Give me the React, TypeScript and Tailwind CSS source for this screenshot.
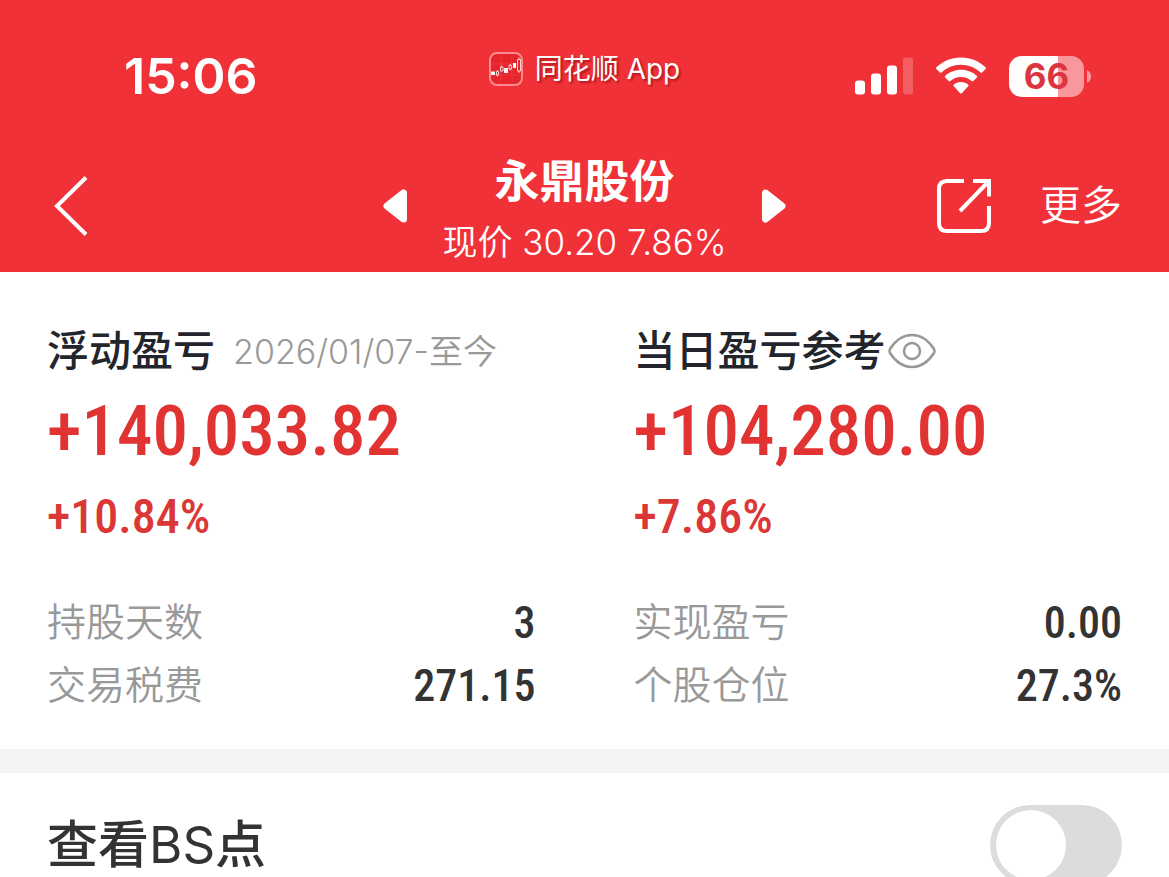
import React, { useState } from 'react';

interface Stat {
  label: string;
  value: string;
}

interface ProfitPanelProps {
  title: string;
  extra?: React.ReactNode;
  amount: string;
  percent: string;
  stats: Stat[];
}

const floatingStats: Stat[] = [
  { label: '持股天数', value: '3' },
  { label: '交易税费', value: '271.15' },
];

const dailyStats: Stat[] = [
  { label: '实现盈亏', value: '0.00' },
  { label: '个股仓位', value: '27.3%' },
];

const AppLogo = () => (
  <svg width="34" height="34" viewBox="0 0 34 34" fill="none" aria-hidden="true">
    <rect x="1" y="1" width="32" height="32" rx="7" fill="#e5242c" stroke="#ff8a8e" strokeWidth="2" />
    <path d="M2 12h30M2 23h30M12 2v30M23 2v30" stroke="#f04a50" strokeWidth="0.5" />
    <path d="M2 19.500h4v3.500H2zM15 16h4v5h-4zM24 11h3v5h-3z" fill="#fff" />
    <path
      d="M7.500 19.500h2v3.500h-2zM8.500 18v1.500M8.500 23v1.500M11.500 15h2.500v4h-2.500zM12.700 13.500V15M20 13.500h2.500V17H20zM21.200 12v1.500M21.200 17v1.500M28.500 7.500h3v11.500h-3zM30 5.500v2M30 19v2"
      stroke="#fff"
      strokeWidth="0.8"
    />
  </svg>
);

const SignalIcon = () => (
  <svg width="58" height="38" viewBox="0 0 58 38" fill="#fff" aria-hidden="true">
    <rect x="0" y="23.500" width="10" height="14" rx="3" />
    <rect x="16" y="16.500" width="10" height="21" rx="3" />
    <rect x="32" y="8.500" width="10" height="29" rx="3" />
    <rect x="48" y="0.500" width="10" height="37" rx="3" opacity="0.22" />
  </svg>
);

const WifiIcon = () => (
  <svg width="50" height="38" viewBox="0 0 50 38" fill="#fff" aria-hidden="true">
    <path d="M25 0.500C34.500 0.500 43.200 4.200 49.600 10.300Q50.400 11.100 49.600 11.900L46.100 15.400Q45.300 16.100 44.500 15.400C39.400 10.600 32.500 7.700 25 7.700S10.600 10.600 5.500 15.400Q4.700 16.100 3.900 15.400L0.400 11.900Q-0.400 11.100 0.400 10.300C6.800 4.200 15.500 0.500 25 0.500Z" />
    <path d="M25 12.800C31.100 12.800 36.700 15.100 40.900 18.900Q41.700 19.700 40.900 20.500L37.300 24.100Q36.500 24.800 35.700 24.100C32.900 21.600 29.100 20 25 20S17.100 21.600 14.300 24.100Q13.500 24.800 12.700 24.100L9.100 20.500Q8.300 19.700 9.100 18.900C13.300 15.100 18.900 12.800 25 12.800Z" />
    <path d="M25 25C27.800 25 30.300 26 32.200 27.600Q33 28.400 32.200 29.200L25.800 36.200Q25 37 24.200 36.200L17.800 29.200Q17 28.400 17.800 27.600C19.700 26 22.200 25 25 25Z" />
  </svg>
);

const Battery = () => (
  <div className="flex items-center gap-[3px]">
    <div className="flex h-[41px] w-[75px] items-center justify-center rounded-[13px] bg-linear-to-r from-white from-66% to-[#f8989c] to-66% text-[35px] font-bold text-[#dd3540]">
      66
    </div>
    <svg width="4" height="13" viewBox="0 0 4 13" aria-hidden="true">
      <path d="M0 0Q4 2 4 6.500T0 13Z" fill="#f8989c" />
    </svg>
  </div>
);

const ArrowIcon = ({ className = '' }: { className?: string }) => (
  <svg className={className} width="25" height="34" viewBox="0 0 25 34" aria-hidden="true">
    <path d="M4 17L20.500 4V30Z" fill="#fff" stroke="#fff" strokeWidth="7" strokeLinejoin="round" />
  </svg>
);

const ShareIcon = () => (
  <svg width="56" height="56" viewBox="0 0 56 56" fill="none" stroke="#fff" strokeWidth="4" aria-hidden="true">
    <path d="M28 3H11Q3 3 3 11V45Q3 53 11 53H45Q53 53 53 45V28" />
    <path d="M37 3H53V18.500M53 3L24 33" />
  </svg>
);

const EyeIcon = () => (
  <svg width="48" height="36" viewBox="0 0 48 36" fill="none" stroke="#999" strokeWidth="2.500" aria-hidden="true">
    <path d="M2 16Q11 2 24 2T46 16Q47 18 46 20Q37 34 24 34T2 20Q1 18 2 16Z" />
    <circle cx="24" cy="18" r="8" />
  </svg>
);

const ProfitPanel: React.FC<ProfitPanelProps> = ({ title, extra, amount, percent, stats }) => (
  <div>
    <div className="flex h-16 items-center">
      <h2 className="text-[42px] leading-[60px] font-medium whitespace-nowrap text-[#22252b]">{title}</h2>
      {extra}
    </div>
    <p className="font-['Roboto_Condensed',Roboto,sans-serif] text-[71px] leading-[96px] font-medium text-[#e23333]">
      {amount}
    </p>
    <p className="font-['Roboto_Condensed',Roboto,sans-serif] text-5xl leading-[76px] font-medium text-[#dc3737]">
      {percent}
    </p>
    <dl className="mt-9">
      {stats.map(stat => (
        <div key={stat.label} className="flex h-[63px] items-center justify-between">
          <dt className="text-[39px] font-[350] text-[#999]">{stat.label}</dt>
          <dd className="font-['Roboto_Condensed',Roboto,sans-serif] text-[44px] font-medium text-[#333]">
            {stat.value}
          </dd>
        </div>
      ))}
    </dl>
  </div>
);

export default function App() {
  const [showPoints, setShowPoints] = useState(false);
  const [hidden, setHidden] = useState(false);

  return (
    <div className="h-screen overflow-hidden bg-white font-[Inter,'Noto_Sans_CJK_SC',sans-serif]">
      <header className="bg-[#f03138] pt-12 text-white">
        {/* Status bar */}
        <div className="grid h-14 grid-cols-[1fr_auto_1fr] items-center">
          <span className="pl-[124px] text-[50px] leading-[56px] font-semibold">15:06</span>
          <div className="flex h-[42px] items-center gap-3 self-start">
            <AppLogo />
            <span className="text-[28px] text-shadow-[2px_2px_2px_rgb(120_0_0/0.5)]">同花顺 App</span>
          </div>
          <div className="flex items-center justify-end gap-[23px] pr-[78px]">
            <SignalIcon />
            <WifiIcon />
            <Battery />
          </div>
        </div>

        {/* Navigation */}
        <nav className="mt-9 grid grid-cols-[1fr_auto_1fr] items-center">
          <button type="button" aria-label="返回" className="justify-self-start pl-[54px]">
            <svg width="34" height="60" viewBox="0 0 34 60" fill="none" stroke="#fff" strokeWidth="4" aria-hidden="true">
              <path d="M32 1.500L3 30L32 58.500" />
            </svg>
          </button>
          <div className="flex items-center gap-[34px]">
            <button type="button" aria-label="上一只">
              <ArrowIcon />
            </button>
            <div className="pt-3 text-center">
              <h1 className="text-[45px] leading-[60px] font-bold">永鼎股份</h1>
              <p className="text-[35px] leading-[60px] font-[350]">现价 30.20 7.86%</p>
            </div>
            <button type="button" aria-label="下一只">
              <ArrowIcon className="rotate-180" />
            </button>
          </div>
          <div className="flex items-center justify-end gap-12 pr-[47px]">
            <button type="button" aria-label="分享">
              <ShareIcon />
            </button>
            <button type="button" className="text-[41px] font-[350]">更多</button>
          </div>
        </nav>
      </header>

      <main>
        {/* Profit summary */}
        <section className="grid grid-cols-2 gap-[98px] px-[47px] pt-[47px] pb-8">
          <ProfitPanel
            title="浮动盈亏"
            extra={<span className="ml-[18px] text-[34px] font-[350] whitespace-nowrap text-[#999]">2026/01/07-至今</span>}
            amount="+140,033.82"
            percent="+10.84%"
            stats={floatingStats}
          />
          <ProfitPanel
            title="当日盈亏参考"
            extra={
              <button
                type="button"
                aria-label="隐藏金额"
                aria-pressed={hidden}
                className="ml-[2px]"
                onClick={() => setHidden(!hidden)}
              >
                <EyeIcon />
              </button>
            }
            amount={hidden ? '****' : '+104,280.00'}
            percent={hidden ? '****' : '+7.86%'}
            stats={dailyStats}
          />
        </section>

        <div className="h-6 bg-[#f4f4f4]" />

        {/* BS points switch */}
        <section className="flex items-center justify-between px-[47px] py-8">
          <label htmlFor="bs-points" className="text-[51px] leading-[80px] font-medium text-[#333]">
            查看<span className="font-normal">BS</span>点
          </label>
          <input
            id="bs-points"
            type="checkbox"
            role="switch"
            checked={showPoints}
            onChange={e => setShowPoints(e.target.checked)}
            className="flex h-20 w-[132px] appearance-none items-center rounded-full bg-[#dcdcdc] px-[6px] before:h-[70px] before:w-[70px] before:rounded-full before:bg-white before:content-[''] checked:justify-end checked:bg-[#f03138]"
          />
        </section>
      </main>
    </div>
  );
}
